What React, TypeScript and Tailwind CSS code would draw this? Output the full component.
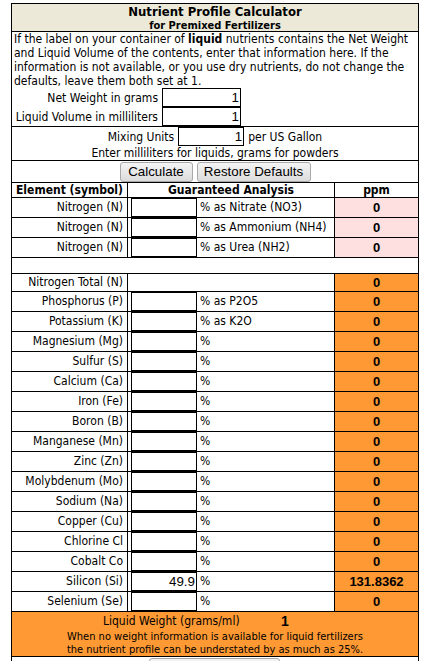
import React from "react";

const inputCls =
  "block h-[19px] border border-black bg-white pr-[1px] text-right font-['Liberation_Sans',Arial,sans-serif] text-[13.33px] text-black outline-none";

type Row = { name: string; label: string; value?: string; ppm: string };

const nitrogenRows: Row[] = [
  { name: "Nitrogen (N)", label: "% as Nitrate (NO3)", ppm: "0" },
  { name: "Nitrogen (N)", label: "% as Ammonium (NH4)", ppm: "0" },
  { name: "Nitrogen (N)", label: "% as Urea (NH2)", ppm: "0" },
];

const elementRows: Row[] = [
  { name: "Phosphorus (P)", label: "% as P2O5", ppm: "0" },
  { name: "Potassium (K)", label: "% as K2O", ppm: "0" },
  { name: "Magnesium (Mg)", label: "%", ppm: "0" },
  { name: "Sulfur (S)", label: "%", ppm: "0" },
  { name: "Calcium (Ca)", label: "%", ppm: "0" },
  { name: "Iron (Fe)", label: "%", ppm: "0" },
  { name: "Boron (B)", label: "%", ppm: "0" },
  { name: "Manganese (Mn)", label: "%", ppm: "0" },
  { name: "Zinc (Zn)", label: "%", ppm: "0" },
  { name: "Molybdenum (Mo)", label: "%", ppm: "0" },
  { name: "Sodium (Na)", label: "%", ppm: "0" },
  { name: "Copper (Cu)", label: "%", ppm: "0" },
  { name: "Chlorine Cl", label: "%", ppm: "0" },
  { name: "Cobalt Co", label: "%", ppm: "0" },
  { name: "Silicon (Si)", label: "%", value: "49.9", ppm: "131.8362" },
  { name: "Selenium (Se)", label: "%", ppm: "0" },
];

// ppm results are shown in a bolder Arial-like face
const ppmCls = "w-[83px] text-center font-['Liberation_Sans',Arial,sans-serif] text-[13px] font-bold";

function NutrientRow({ row, pink }: { row: Row; pink?: boolean }) {
  return (
    <div className="flex h-[20px] border-b border-black leading-[19px]">
      <div className="w-[116px] border-r border-black pr-[4px] text-right whitespace-nowrap">{row.name}</div>
      <div className="w-[69px] pl-[3px]">
        <input className={inputCls + " w-[66px]"} defaultValue={row.value ?? ""} />
      </div>
      <div className="w-[138px] border-r border-black pl-[3px] whitespace-nowrap">{row.label}</div>
      <div className={ppmCls + (pink ? " bg-[#ffe0e0]" : " bg-[#ff9933]")}>{row.ppm}</div>
    </div>
  );
}

function GrayButton({ children, className }: { children?: React.ReactNode; className?: string }) {
  return (
    <button
      className={
        "h-[20px] rounded-[3px] border border-[#a9a9a9] bg-linear-to-b from-[#f4f4f4] to-[#dcdcdc] font-['Liberation_Sans',Arial,sans-serif] text-[13.33px] leading-[18px] text-black " +
        (className ?? "")
      }
    >
      {children}
    </button>
  );
}

export default function App() {
  return (
    <div className="h-[661px] overflow-hidden bg-white pl-[11px] pt-[3px] font-['DejaVu_Sans_Condensed','Liberation_Sans',sans-serif] text-[12px] text-black">
      <div className="w-[408px] border-x border-t border-black">
        <div className="h-[28px] border-b border-black bg-[#ece9d8] text-center font-bold">
          <div className="text-[13px] leading-[16px]">Nutrient Profile Calculator</div>
          <div className="text-[11px] leading-[11px]">for Premixed Fertilizers</div>
        </div>

        <div className="h-[95px] border-b border-black pl-[2px]">
          <p className="whitespace-nowrap leading-[14px]">
            If the label on your container of <b>liquid</b> nutrients contains the Net Weight
            <br />
            and Liquid Volume of the contents, enter that information here. If the
            <br />
            information is not available, or you use dry nutrients, do not change the
            <br />
            defaults, leave them both set at 1.
          </p>
          <div className="flex h-[19px] items-center">
            <span className="w-[148px] pr-[4px] text-right whitespace-nowrap">Net Weight in grams</span>
            <input className={inputCls + " w-[79px]"} defaultValue="1" />
          </div>
          <div className="flex h-[19px] items-center">
            <span className="w-[148px] pr-[4px] text-right whitespace-nowrap">Liquid Volume in milliliters</span>
            <input className={inputCls + " w-[79px]"} defaultValue="1" />
          </div>
        </div>

        <div className="h-[34px] border-b border-black">
          <div className="flex h-[19px] items-center justify-center">
            <span className="mr-[4px]">Mixing Units</span>
            <input className={inputCls + " w-[66px]"} defaultValue="1" />
            <span className="ml-[4px]">per US Gallon</span>
          </div>
          <div className="text-center leading-[14px]">Enter milliliters for liquids, grams for powders</div>
        </div>

        <div className="flex h-[22px] justify-center gap-[4px] border-b border-black pt-[1px]">
          <GrayButton className="w-[73px]">Calculate</GrayButton>
          <GrayButton className="w-[114px]">Restore Defaults</GrayButton>
        </div>

        <div className="flex h-[15px] border-b border-black text-center font-bold leading-[14px]">
          <div className="w-[116px] border-r border-black whitespace-nowrap">Element (symbol)</div>
          <div className="w-[207px] border-r border-black">Guaranteed Analysis</div>
          <div className="w-[83px]">ppm</div>
        </div>

        {nitrogenRows.map((r, i) => (
          <NutrientRow key={"n" + i} row={r} pink />
        ))}

        <div className="h-[16px] border-b border-black" />

        <div className="flex h-[18px] border-b border-black leading-[17px]">
          <div className="w-[116px] border-r border-black pr-[4px] text-right whitespace-nowrap">Nitrogen Total (N)</div>
          <div className="w-[207px] border-r border-black" />
          <div className={ppmCls + " bg-[#ff9933]"}>0</div>
        </div>

        {elementRows.map((r) => (
          <NutrientRow key={r.name} row={r} />
        ))}

        <div className="h-[45px] border-b border-black bg-[#ff9933]">
          <div className="flex h-[18px] items-center">
            <span className="ml-[91px] w-[139px] whitespace-nowrap">Liquid Weight (grams/ml)</span>
            <span className="ml-[39px] font-['Liberation_Sans',Arial,sans-serif] text-[14px] font-bold">1</span>
          </div>
          <div className="text-center text-[11px] leading-[13px] whitespace-nowrap">
            When no weight information is available for liquid fertilizers
            <br />
            the nutrient profile can be understated by as much as 25%.
          </div>
        </div>

        <div className="h-[30px] pl-[137px] pt-[1px]">
          <GrayButton className="w-[131px]" />
        </div>
      </div>
    </div>
  );
}
